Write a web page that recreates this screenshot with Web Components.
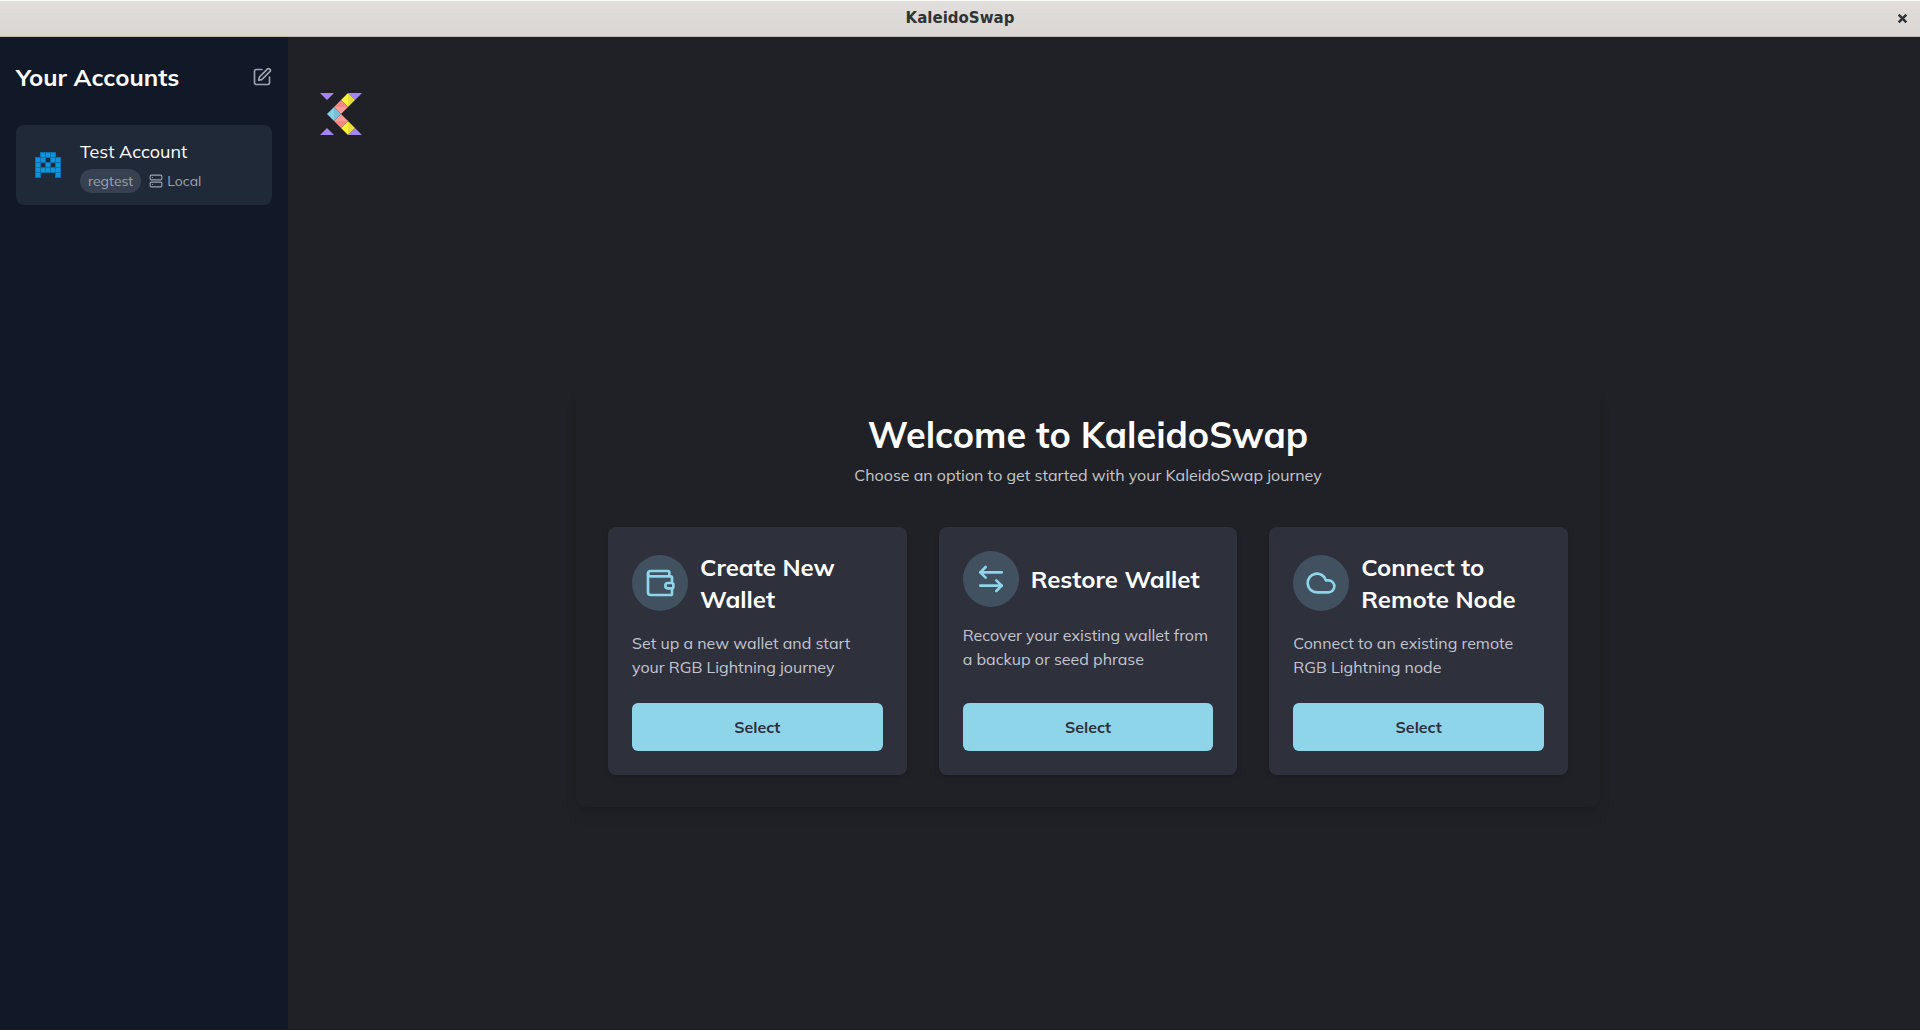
<!DOCTYPE html>
<html lang="en">
<head>
<meta charset="utf-8">
<title>KaleidoSwap</title>
<style>
  html, body { height: 100%; margin: 0; }
  body {
    --surface: #202126;
    --panel: #2e303c;
    --accent: #8fd5ea;
    --muted: #9ca3af;
    background: var(--surface);
    color: #fff;
    font-family: Mulish, "Noto Sans", sans-serif;
    font-size: 16px;
    line-height: 24px;
  }
</style>
</head>
<body>
<ks-app>
  <ks-titlebar slot="titlebar">KaleidoSwap</ks-titlebar>
  <ks-sidebar slot="sidebar">
    <span slot="heading">Your Accounts</span>
    <ks-account network="regtest" host="Local">Test Account</ks-account>
  </ks-sidebar>
  <ks-logo slot="brand"></ks-logo>
  <ks-welcome>
    <span slot="heading">Welcome to KaleidoSwap</span>
    <span slot="lead">Choose an option to get started with your KaleidoSwap journey</span>
    <ks-option icon="wallet">
      <span slot="heading">Create New Wallet</span>
      Set up a new wallet and start your RGB Lightning journey
    </ks-option>
    <ks-option icon="arrows">
      <span slot="heading">Restore Wallet</span>
      Recover your existing wallet from a backup or seed phrase
    </ks-option>
    <ks-option icon="cloud">
      <span slot="heading">Connect to Remote Node</span>
      Connect to an existing remote RGB Lightning node
    </ks-option>
  </ks-welcome>
</ks-app>

<script>
const ICONS = {
  wallet: '<path d="M19 7V4a1 1 0 0 0-1-1H5a2 2 0 0 0 0 4h15a1 1 0 0 1 1 1v4h-3a2 2 0 0 0 0 4h3a1 1 0 0 0 1-1v-2a1 1 0 0 0-1-1"/><path d="M3 5v14a2 2 0 0 0 2 2h15a1 1 0 0 0 1-1v-4"/>',
  arrows: '<path d="M8 3 4 7l4 4"/><path d="M4 7h16"/><path d="m16 21 4-4-4-4"/><path d="M20 17H4"/>',
  cloud: '<path d="M17.5 19H9a7 7 0 1 1 6.71-9h1.79a4.5 4.5 0 1 1 0 9Z"/>',
  edit: '<path d="M12 3H5a2 2 0 0 0-2 2v14a2 2 0 0 0 2 2h14a2 2 0 0 0 2-2v-7"/><path d="M18.375 2.625a1 1 0 0 1 3 3l-9.013 9.014a2 2 0 0 1-.853.505l-2.873.84a.5.5 0 0 1-.62-.62l.84-2.873a2 2 0 0 1 .506-.852z"/>',
  server: '<rect x="2" y="2" width="20" height="8" rx="2"/><rect x="2" y="14" width="20" height="8" rx="2"/><path d="M6 6h.01M6 18h.01"/>'
};

class KsElement extends HTMLElement {
  connectedCallback() {
    if (this.shadowRoot) return;
    this.attachShadow({ mode: 'open' }).innerHTML = this.render();
  }
}

customElements.define('ks-icon', class extends KsElement {
  render() {
    return `<style>
      :host { display: block; flex: none; width: var(--icon-size, 24px); height: var(--icon-size, 24px); }
      svg { display: block; width: 100%; height: 100%; }
    </style>
    <svg viewBox="0 0 24 24" fill="none" stroke="currentColor" stroke-width="2" stroke-linecap="round" stroke-linejoin="round" aria-hidden="true">${ICONS[this.getAttribute('name')]}</svg>`;
  }
});

customElements.define('ks-app', class extends KsElement {
  render() {
    return `<style>
      :host { display: flex; flex-direction: column; box-sizing: border-box; min-height: 100vh; border-bottom: 1px solid #1a1a1f; }
      .body { display: flex; flex: 1; }
      main { flex: 1; display: flex; flex-direction: column; min-width: 0; }
      header { padding: 56px 32px 25px; }
      .center { flex: 1; display: flex; align-items: center; justify-content: center; padding: 0 64px 0 32px; }
    </style>
    <slot name="titlebar"></slot>
    <div class="body">
      <slot name="sidebar"></slot>
      <main>
        <header><slot name="brand"></slot></header>
        <div class="center"><slot></slot></div>
      </main>
    </div>`;
  }
});

customElements.define('ks-titlebar', class extends KsElement {
  render() {
    return `<style>
      :host {
        display: grid; grid-template-columns: 36px 1fr 36px; align-items: center;
        box-sizing: border-box; height: 37px;
        border-top: 1px solid #f8f8f7; border-bottom: 1px solid #c3b7aa;
        background: linear-gradient(#e1dedb, #dad6d2);
        color: #2e3436; font: bold 15px/20px "DejaVu Sans", sans-serif;
      }
      .name { grid-column: 2; text-align: center; padding-bottom: 2px; }
      button { display: grid; place-items: center; width: 36px; height: 35px; padding: 0; border: 0; background: none; color: inherit; }
      svg { display: block; width: 9px; height: 9px; }
    </style>
    <span class="name"><slot></slot></span>
    <button type="button" aria-label="Close"><svg viewBox="0 0 8 8" stroke="currentColor" stroke-width="2.2"><path d="M.6.6l6.8 6.8M7.4.6L.6 7.4"/></svg></button>`;
  }
});

customElements.define('ks-sidebar', class extends KsElement {
  render() {
    return `<style>
      :host { display: block; box-sizing: border-box; flex: none; width: 288px; padding: 24px 16px; background: #111827; }
      .top { display: flex; align-items: center; justify-content: space-between; margin-bottom: 32px; }
      h2 { margin: 0; font-size: 24px; line-height: 32px; font-weight: 700; }
      button { padding: 0; border: 0; background: none; color: var(--muted); --icon-size: 20px; }
    </style>
    <div class="top">
      <h2><slot name="heading"></slot></h2>
      <button type="button" aria-label="Edit accounts"><ks-icon name="edit"></ks-icon></button>
    </div>
    <slot></slot>`;
  }
});

customElements.define('ks-account', class extends KsElement {
  render() {
    const rows = ['01110', '11011', '10101', '11111', '10001'];
    const cells = rows.map((row, y) => [...row].map((on, x) =>
      on === '1' ? `<rect x="${x * 5 + .5}" y="${y * 5 + .5}" width="5" height="5"/>` : '').join('')).join('');
    return `<style>
      :host { display: flex; align-items: center; gap: 12px; padding: 12px; border-radius: 8px; background: #1f2937; }
      .avatar { flex: none; display: grid; place-items: center; width: 40px; height: 40px; }
      .avatar svg { width: 26px; height: 26px; }
      .name { font-size: 18px; line-height: 30px; margin-bottom: 2px; }
      .meta { display: flex; align-items: center; gap: 8px; font-size: 14px; line-height: 24px; color: var(--muted); }
      .tag { padding: 0 8px; border-radius: 12px; background: #374151; }
      .host { display: flex; align-items: center; gap: 4px; --icon-size: 14px; }
    </style>
    <div class="avatar"><svg viewBox="0 0 26 26" fill="#0d94dd" stroke="#0b70a9" stroke-width="1" aria-hidden="true">${cells}</svg></div>
    <div>
      <div class="name"><slot></slot></div>
      <div class="meta">
        <span class="tag">${this.getAttribute('network')}</span>
        <span class="host"><ks-icon name="server"></ks-icon>${this.getAttribute('host')}</span>
      </div>
    </div>`;
  }
});

customElements.define('ks-logo', class extends KsElement {
  render() {
    const gem = (x, y, left, right) =>
      `<path fill="${left}" d="M${x} ${y - 7}v14l-7-7z"/><path fill="${right}" d="M${x} ${y - 7}v14l7-7z"/>`;
    return `<style>
      :host { display: block; width: 42px; height: 42px; }
      svg { display: block; width: 100%; height: 100%; }
    </style>
    <svg viewBox="0 0 42 42" role="img" aria-label="KaleidoSwap logo">
      <path fill="#a584f8" d="M0 0h14l-7 7zM28 0h14l-7 7zM0 42h14l-7-7zM28 42h14l-7-7z"/>
      ${gem(28, 7, '#fbf23c', '#e9df3c')}${gem(28, 35, '#fbf23c', '#e9df3c')}
      <path fill="#f48885" d="M21 7l7 7H14z"/><path fill="#fd9b98" d="M28 14l-7 7-7-7z"/>
      <path fill="#fd9b98" d="M21 21l7 7H14z"/><path fill="#f48885" d="M28 28l-7 7-7-7z"/>
      ${gem(14, 21, '#88d0e5', '#79bfd5')}
    </svg>`;
  }
});

customElements.define('ks-welcome', class extends KsElement {
  render() {
    return `<style>
      :host {
        display: block; box-sizing: border-box; width: 100%; max-width: 1024px; padding: 32px; border-radius: 12px;
        box-shadow: 0 10px 15px -3px rgb(0 0 0 / .1), 0 4px 6px -4px rgb(0 0 0 / .1);
      }
      header { text-align: center; margin-bottom: 40px; }
      h1 { margin: 0 0 8px; font-size: 36px; line-height: 40px; font-weight: 700; }
      p { margin: 0; color: #c5c7cb; }
      .options { display: grid; grid-template-columns: repeat(3, 1fr); gap: 32px; }
    </style>
    <header>
      <h1><slot name="heading"></slot></h1>
      <p><slot name="lead"></slot></p>
    </header>
    <div class="options"><slot></slot></div>`;
  }
});

customElements.define('ks-option', class extends KsElement {
  render() {
    return `<style>
      :host {
        display: flex; flex-direction: column; padding: 24px; border-radius: 8px; background: var(--panel);
        box-shadow: 0 4px 6px -1px rgb(0 0 0 / .1), 0 2px 4px -2px rgb(0 0 0 / .1);
      }
      .top { display: flex; align-items: center; gap: 12px; margin-bottom: 16px; }
      .badge { flex: none; padding: 12px; border-radius: 50%; background: #415160; color: var(--accent); --icon-size: 32px; }
      h3 { margin: 0; font-size: 24px; line-height: 32px; font-weight: 700; }
      p { margin: 0 0 24px; color: #c4c5cf; }
      button {
        margin-top: auto; padding: 12px 24px; border: 0; border-radius: 6px; background: var(--accent);
        color: var(--panel); font: inherit; font-weight: 700;
      }
    </style>
    <div class="top">
      <div class="badge"><ks-icon name="${this.getAttribute('icon')}"></ks-icon></div>
      <h3><slot name="heading"></slot></h3>
    </div>
    <p><slot></slot></p>
    <button type="button">Select</button>`;
  }
});
</script>
</body>
</html>
